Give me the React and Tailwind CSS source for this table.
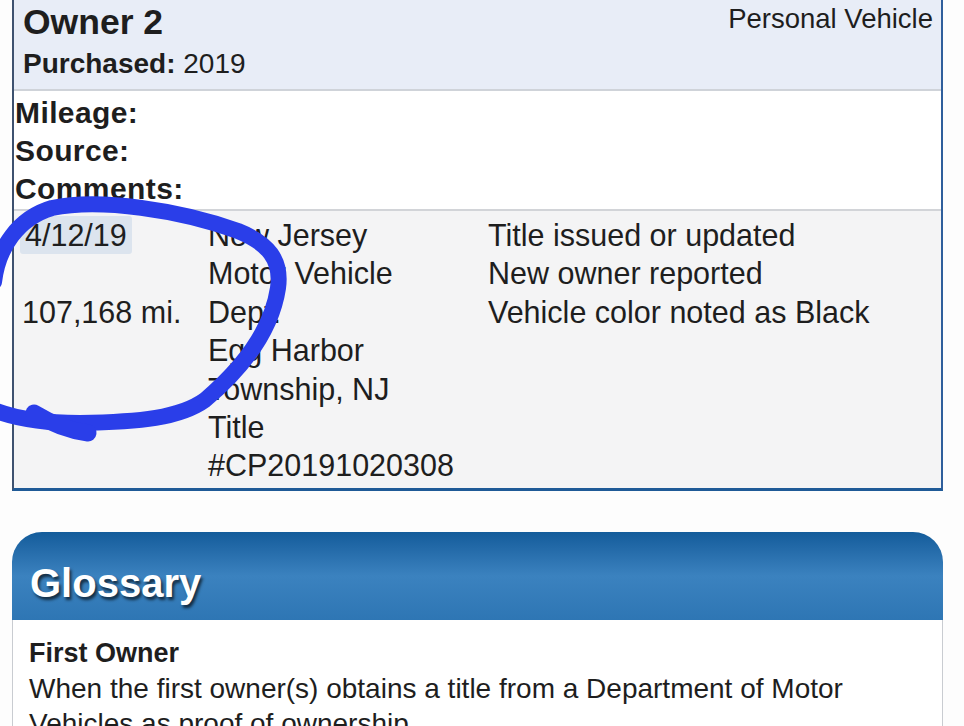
export default function App() {
  const font = { fontFamily: '"Liberation Sans", Arial, Helvetica, sans-serif' };
  return (
    <div className="relative h-[726px] w-[964px] overflow-hidden bg-[#fdfdfd] text-[#1e1e1e]" style={font}>
      {/* Owner card */}
      <div className="ml-[12px] w-[931px] border-l-2 border-r-2 border-b-[3px] border-l-[#3e5270] border-r-[#2f5f9c] border-b-[#1f5a97]">
        <div className="flex justify-between bg-[#e8edf7] border-b-2 border-[#cfd3d9] h-[91px]">
          <div className="pl-[9px]">
            <div className="text-[35.5px] font-bold leading-[42px] mt-[1px]">Owner 2</div>
            <div className="text-[28px] leading-[42px]">
              <span className="font-bold">Purchased:</span> 2019
            </div>
          </div>
          <div className="pr-[8px] text-[27.5px] leading-[38px]">Personal Vehicle</div>
        </div>
        <div className="bg-white border-b-2 border-[#d2d4d8] pt-[3px] pb-[1px] font-bold text-[30px] leading-[38px] tracking-[0.4px]">
          <div className="pl-[1px]">Mileage:</div>
          <div className="pl-[1px]">Source:</div>
          <div className="pl-[1px]">Comments:</div>
        </div>
        <div className="flex bg-[#f4f4f5] pt-[5px] pb-[3px] text-[30.5px] leading-[38.4px]">
          <div className="w-[194px] pl-[6px]">
            <div className="inline-block rounded-[3px] bg-[#dce4ee] px-[5px]">4/12/19</div>
            <div>&nbsp;</div>
            <div className="pl-[2px]">107,168 mi.</div>
          </div>
          <div className="w-[280px]">
            <div>New Jersey</div>
            <div>Motor Vehicle</div>
            <div>Dept.</div>
            <div>Egg Harbor</div>
            <div>Township, NJ</div>
            <div>Title</div>
            <div>#CP20191020308</div>
          </div>
          <div>
            <div>Title issued or updated</div>
            <div>New owner reported</div>
            <div>Vehicle color noted as Black</div>
          </div>
        </div>
      </div>

      {/* Glossary */}
      <div className="ml-[12px] mt-[41px] w-[931px]">
        <div className="h-[88px] rounded-t-[30px] bg-gradient-to-b from-[#135c9b] via-[#3b82bf] to-[#2e76b4] flex items-center pl-[18px] pt-[14px]">
          <span className="text-white font-bold text-[40px]" style={{ textShadow: '2px 3px 3px rgba(0,0,0,0.65)' }}>
            Glossary
          </span>
        </div>
        <div className="bg-white border-l border-r border-[#c9ccd1] pl-[16px] pt-[15px]">
          <div className="font-bold text-[27px] leading-[36px]">First Owner</div>
          <div className="text-[28px] leading-[35px]">
            When the first owner(s) obtains a title from a Department of Motor
            <br />
            Vehicles as proof of ownership.
          </div>
        </div>
      </div>

      {/* Hand-drawn marker annotation */}
      <svg className="pointer-events-none absolute left-0 top-0" width="964" height="726" viewBox="0 0 964 726">
        <path
          d="M -6 282 C -2 248 18 218 52 208 C 100 198 180 210 238 231 C 268 243 282 260 278 288 C 272 328 245 366 205 400 C 180 418 140 422 80 423 C 40 423 14 418 -6 410"
          fill="none"
          stroke="#2a3ee9"
          strokeWidth="16"
          strokeLinecap="round"
          strokeLinejoin="round"
        />
        <path d="M 34 413 C 52 424 72 431 88 433" fill="none" stroke="#2a3ee9" strokeWidth="17" strokeLinecap="round" />
      </svg>
    </div>
  );
}
